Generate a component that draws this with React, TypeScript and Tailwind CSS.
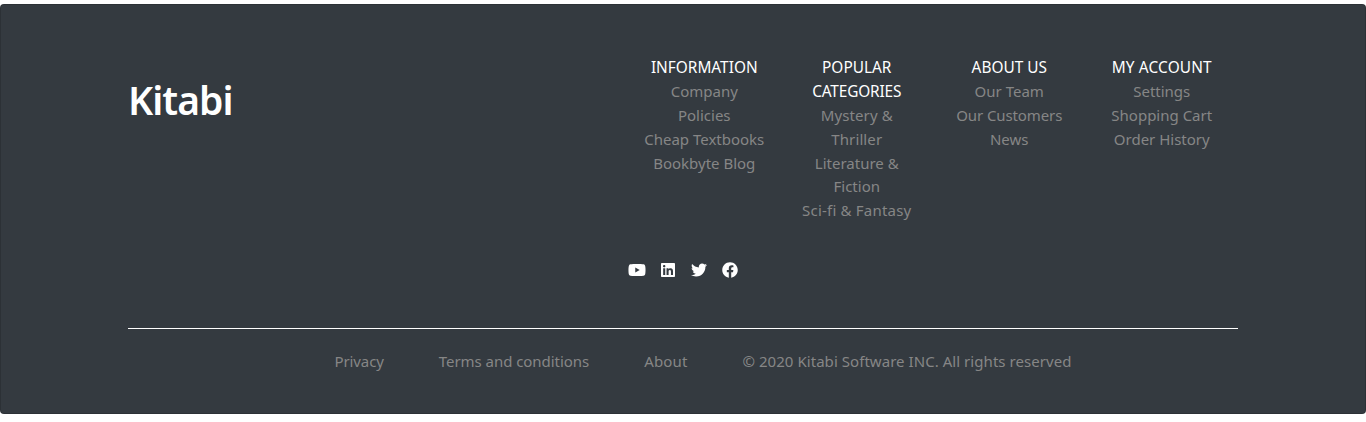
import type { ReactNode } from "react";
import { FaYoutube, FaLinkedin, FaTwitter, FaFacebook } from "react-icons/fa";

function Column({ title, children }: { title: ReactNode; children: ReactNode }) {
  return (
    <div className="text-center whitespace-nowrap">
      <h2 className="-mb-px pt-px text-[15.4px] text-white">{title}</h2>
      <ul className="text-[#868686]">{children}</ul>
    </div>
  );
}

export default function App() {
  return (
    <div className="h-[422px] bg-white pt-1 font-['Noto_Sans','Open_Sans',sans-serif] text-[15px] leading-6">
      <footer className="flex h-[410px] flex-col rounded border border-black/15 bg-[#343a40] px-[127px] pt-[50px]">
        <div className="flex h-[202px] justify-between">
          <h1 className="pt-[21px] text-[39px] leading-[48px] font-semibold tracking-[-0.95px] text-white">Kitabi</h1>
          <div className="grid w-[610px] grid-cols-4">
            <Column title="INFORMATION">
              <li>Company</li>
              <li>Policies</li>
              <li>Cheap Textbooks</li>
              <li>Bookbyte Blog</li>
            </Column>
            <Column title={<>POPULAR<br /><span className="tracking-[-0.15px]">CATEGORIES</span></>}>
              <li className="tracking-[0.1px]">Mystery &amp;<br />Thriller</li>
              <li className="h-[47px]">Literature &amp;<br /><span className="relative -top-px">Fiction</span></li>
              <li className="tracking-[0.2px]">Sci-fi &amp; Fantasy</li>
            </Column>
            <Column title="ABOUT US">
              <li>Our Team</li>
              <li className="tracking-[-0.1px]">Our Customers</li>
              <li>News</li>
            </Column>
            <Column title={<span className="tracking-[0.15px]">MY ACCOUNT</span>}>
              <li>Settings</li>
              <li>Shopping Cart</li>
              <li>Order History</li>
            </Column>
          </div>
        </div>
        <div className="mt-[5px] flex justify-center gap-[15.3px] text-white">
          <FaYoutube className="h-4 w-[18px]" />
          <FaLinkedin className="h-4 w-[14px]" />
          <FaTwitter className="h-4 w-4" />
          <FaFacebook className="h-4 w-4" />
        </div>
        <div className="mt-[50px] h-px bg-white" />
        <div className="flex gap-[55px] pt-5 pl-[206.5px] whitespace-nowrap text-[#868686]">
          <span className="tracking-[-0.1px]">Privacy</span>
          <span className="tracking-[-0.05px]">Terms and conditions</span>
          <span className="tracking-[0.15px]">About</span>
          <span className="tracking-[0.05px]">© 2020 Kitabi Software INC. All rights reserved</span>
        </div>
      </footer>
    </div>
  );
}
